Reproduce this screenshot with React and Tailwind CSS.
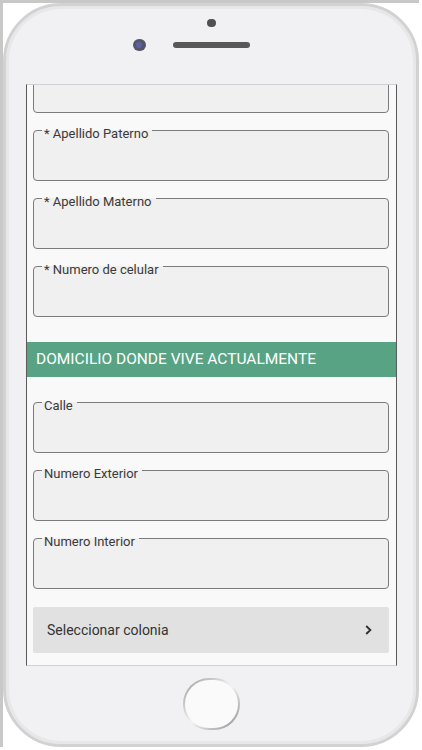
import React from 'react';

function Field({ label }) {
  return (
    <fieldset className="h-[58px] rounded border border-[#7b7b7b] bg-[#f0f0f0]">
      <legend className="ml-[8px] pl-[2px] pr-[4px] text-[13px] leading-[15px] text-[#3a3a3a]">
        <span className="relative top-[3px]">{label}</span>
      </legend>
    </fieldset>
  );
}

export default function App() {
  return (
    <div className="w-[422px] h-[750px] bg-white font-[family-name:Roboto,sans-serif]">
      <div className="w-[419px] h-[747px] border-t-[3px] border-l-[3px] border-[#c8c8c8]">
        <div className="w-[416px] h-[744px] rounded-[58px] border-[3px] border-[#d2d2d2] bg-[#f1f1f3] shadow-[inset_0_0_0_3px_#e7e7e9] flex flex-col">
          {/* top of phone */}
          <div className="h-[78px] flex flex-col items-center">
            <div className="mt-[13px] w-[9px] h-[8px] rounded-full bg-[#505050]" />
            <div className="mt-[12px] flex items-center gap-[27px]">
              <div className="w-[13px] h-[12px] rounded-full bg-[#56566a] flex items-center justify-center">
                <div className="w-[6px] h-[6px] rounded-full bg-[#5d60a6]" />
              </div>
              <div className="w-[77px] h-[6px] rounded-full bg-[#585858]" />
              <div className="w-[13px]" />
            </div>
          </div>

          {/* screen */}
          <div className="ml-[20px] w-[371px] h-[582px] overflow-hidden border-x border-x-[#5a5a5a] border-y border-y-[#d0d0d0] bg-[#f9f9f9]">
            <div className="flex flex-col">
              <div className="mt-[-23px] pl-[6px] pr-[7px]">
                <div className="h-[51px] rounded border border-[#7b7b7b] bg-[#f0f0f0]" />
              </div>
              <div className="mt-[10px] pl-[6px] pr-[7px] flex flex-col gap-[10px]">
                <Field label="* Apellido Paterno" />
                <Field label="* Apellido Materno" />
                <Field label="* Numero de celular" />
              </div>

              <div className="mt-[25px] h-[35px] bg-[#58a384] pl-[9px] flex items-center text-[15.5px] text-white">
                DOMICILIO DONDE VIVE ACTUALMENTE
              </div>

              <div className="mt-[18px] pl-[6px] pr-[7px] flex flex-col gap-[10px]">
                <Field label="Calle" />
                <Field label="Numero Exterior" />
                <Field label="Numero Interior" />
              </div>

              <div className="mt-[18px] pl-[6px] pr-[7px]">
                <button className="w-full h-[46px] rounded-[2px] bg-[#e1e1e1] pl-[14px] pr-[17px] flex items-center justify-between text-[14px] text-[#333]">
                  <span>Seleccionar colonia</span>
                  <svg width="7" height="10" viewBox="0 0 7 10" fill="none">
                    <polyline points="1.2,1 5.4,5 1.2,9" stroke="#2e2e2e" strokeWidth="1.8" />
                  </svg>
                </button>
              </div>
            </div>
          </div>

          {/* bottom of phone */}
          <div className="flex justify-center">
            <div className="mt-[12px] w-[57px] h-[52px] rounded-full p-[2px] bg-linear-to-br from-[#9a9a9a] via-[#f4f4f4] to-[#8a8a8a]">
              <div className="w-full h-full rounded-full bg-[#fafafa]" />
            </div>
          </div>
        </div>
      </div>
    </div>
  );
}
